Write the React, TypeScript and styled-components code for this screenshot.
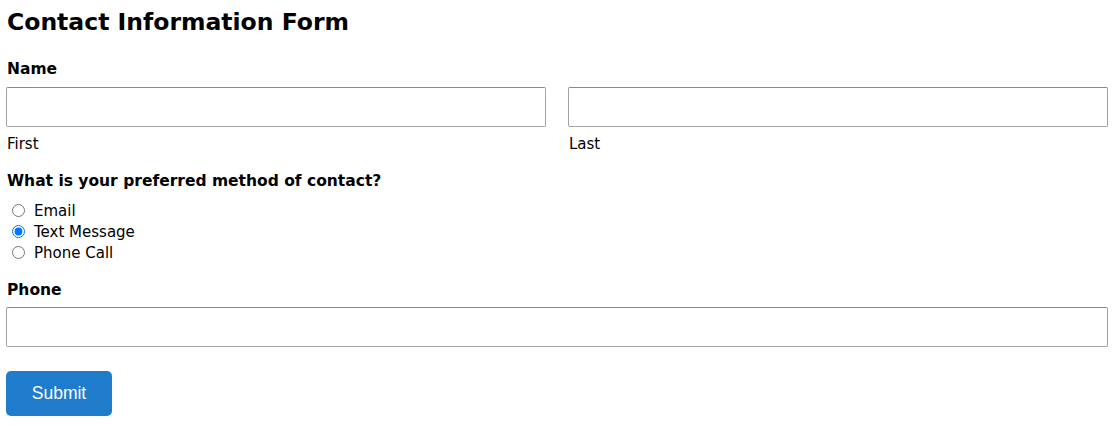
import React from "react";
import styled, { createGlobalStyle } from "styled-components";

const Global = createGlobalStyle`
  html, body { margin: 0; padding: 0; background: #fff; }
  body { font-family: "DejaVu Sans", "Liberation Sans", sans-serif; color: #000; }
  * { box-sizing: border-box; }
`;

const Form = styled.form`
  display: flex;
  flex-direction: column;
  padding: 5px 8px 0 6px;
`;

const Title = styled.h1`
  margin: 0 0 0 1px;
  font-size: 23.5px;
  line-height: 34px;
  font-weight: bold;
`;

const Section = styled.div<{ $top: number }>`
  display: flex;
  flex-direction: column;
  margin-top: ${(p) => p.$top}px;
`;

const Label = styled.div`
  margin-left: 1px;
  font-size: 15.5px;
  font-weight: bold;
  line-height: 20px;
`;

const Row = styled.div<{ $top: number; $cols: number }>`
  display: grid;
  grid-template-columns: repeat(${(p) => p.$cols}, 1fr);
  column-gap: 22px;
  margin-top: ${(p) => p.$top}px;
`;

const Field = styled.div`
  display: flex;
  flex-direction: column;
`;

const Input = styled.input`
  display: block;
  width: 100%;
  height: 40px;
  margin: 0;
  border: 1px solid #a2a2a2;
  border-top-color: #8a8a8a;
  border-radius: 2px;
  font: inherit;
  background: #fff;
`;

const Sub = styled.span`
  margin: 7px 0 0 1px;
  font-size: 15px;
  line-height: 20px;
`;

const Options = styled.div`
  display: flex;
  flex-direction: column;
  margin-top: 9px;
`;

const Option = styled.label`
  display: flex;
  align-items: center;
  height: 21px;
  font-size: 15px;
`;

const Radio = styled.input`
  width: 13px;
  height: 13px;
  margin: 0 9px 0 6px;
`;

const Button = styled.button`
  align-self: flex-start;
  width: 106px;
  height: 45px;
  margin-top: 24px;
  border: none;
  border-radius: 5px;
  background: #1f7bcb;
  color: #fff;
  font-family: "Liberation Sans", Arial, sans-serif;
  font-size: 17.5px;
`;

export default function App() {
  return (
    <>
      <Global />
      <Form onSubmit={(e) => e.preventDefault()}>
        <Title>Contact Information Form</Title>
        <Section $top={20}>
          <Label>Name</Label>
          <Row $top={8} $cols={2}>
            <Field>
              <Input type="text" />
              <Sub>First</Sub>
            </Field>
            <Field>
              <Input type="text" />
              <Sub>Last</Sub>
            </Field>
          </Row>
        </Section>
        <Section $top={17}>
          <Label>What is your preferred method of contact?</Label>
          <Options>
            <Option>
              <Radio type="radio" name="method" />
              Email
            </Option>
            <Option>
              <Radio type="radio" name="method" defaultChecked />
              Text Message
            </Option>
            <Option>
              <Radio type="radio" name="method" />
              Phone Call
            </Option>
          </Options>
        </Section>
        <Section $top={17}>
          <Label>Phone</Label>
          <Row $top={7} $cols={1}>
            <Input type="tel" />
          </Row>
        </Section>
        <Button type="submit">Submit</Button>
      </Form>
    </>
  );
}
